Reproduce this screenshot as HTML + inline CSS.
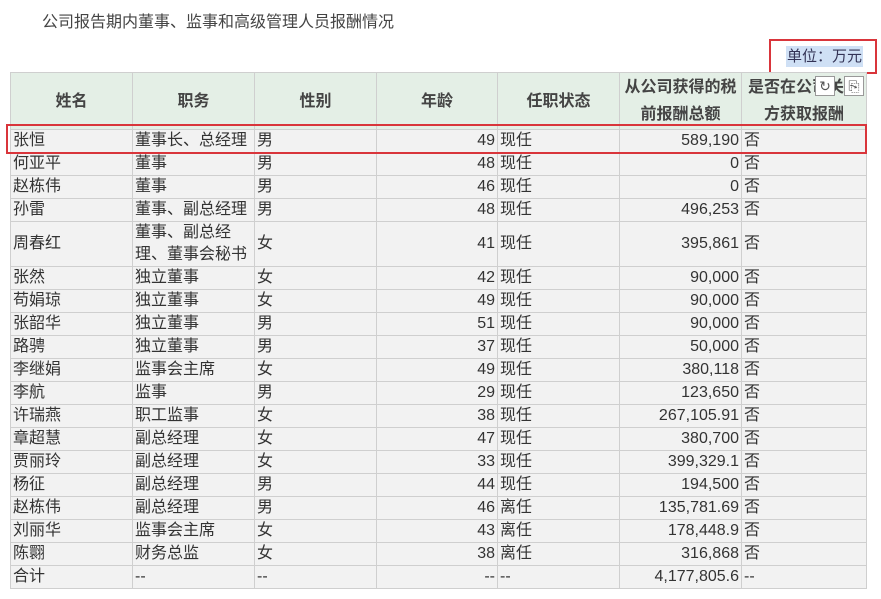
<!DOCTYPE html>
<html><head><meta charset="utf-8"><style>
body{margin:0;width:881px;height:599px;background:#fff;font-family:"Liberation Sans","Noto Sans CJK SC",sans-serif;position:relative;overflow:hidden}
.title{position:absolute;left:42px;top:8px;font-size:16px;color:#444}
.unit{position:absolute;left:786px;top:46px;font-size:15px;color:#335;background:#cfe0f5;line-height:21px;padding:0 1px}
.box1{position:absolute;left:769px;top:39px;width:104px;height:31px;border:2px solid #d9353b}
.box2{position:absolute;left:6px;top:124px;width:857px;height:26px;border:2px solid #d9353b}
table{position:absolute;left:10px;top:72px;border-collapse:collapse;table-layout:fixed;font-size:16px;color:#333}
td,th{border:1px solid #cfcfcf;padding:0 2px;white-space:nowrap;overflow:hidden;line-height:22px}
th{background:#e4efe6;font-weight:bold;color:#444;height:56px;font-size:16px;line-height:27px}
td{background:#f2f2f2;height:22px}
.r{text-align:right}
.ic{position:absolute;top:76px;width:18px;height:18px;border:1px solid #999;background:#fff;font-size:14px;line-height:18px;text-align:center;color:#555}
</style></head><body>
<div class="title">公司报告期内董事、监事和高级管理人员报酬情况</div>
<div class="unit">单位：万元</div>
<div class="box1"></div>
<table>
<colgroup><col style="width:122px"><col style="width:122px"><col style="width:122px"><col style="width:121px"><col style="width:122px"><col style="width:122px"><col style="width:125px"></colgroup>
<tr><th>姓名</th><th>职务</th><th>性别</th><th>年龄</th><th>任职状态</th><th>从公司获得的税<br>前报酬总额</th><th>是否在公司关联<br>方获取报酬</th></tr>
<tr><td>张恒</td><td>董事长、总经理</td><td>男</td><td class="r">49</td><td>现任</td><td class="r">589,190</td><td>否</td></tr>
<tr><td>何亚平</td><td>董事</td><td>男</td><td class="r">48</td><td>现任</td><td class="r">0</td><td>否</td></tr>
<tr><td>赵栋伟</td><td>董事</td><td>男</td><td class="r">46</td><td>现任</td><td class="r">0</td><td>否</td></tr>
<tr><td>孙雷</td><td>董事、副总经理</td><td>男</td><td class="r">48</td><td>现任</td><td class="r">496,253</td><td>否</td></tr>
<tr><td style="height:44px">周春红</td><td>董事、副总经<br>理、董事会秘书</td><td>女</td><td class="r">41</td><td>现任</td><td class="r">395,861</td><td>否</td></tr>
<tr><td>张然</td><td>独立董事</td><td>女</td><td class="r">42</td><td>现任</td><td class="r">90,000</td><td>否</td></tr>
<tr><td>苟娟琼</td><td>独立董事</td><td>女</td><td class="r">49</td><td>现任</td><td class="r">90,000</td><td>否</td></tr>
<tr><td>张韶华</td><td>独立董事</td><td>男</td><td class="r">51</td><td>现任</td><td class="r">90,000</td><td>否</td></tr>
<tr><td>路骋</td><td>独立董事</td><td>男</td><td class="r">37</td><td>现任</td><td class="r">50,000</td><td>否</td></tr>
<tr><td>李继娟</td><td>监事会主席</td><td>女</td><td class="r">49</td><td>现任</td><td class="r">380,118</td><td>否</td></tr>
<tr><td>李航</td><td>监事</td><td>男</td><td class="r">29</td><td>现任</td><td class="r">123,650</td><td>否</td></tr>
<tr><td>许瑞燕</td><td>职工监事</td><td>女</td><td class="r">38</td><td>现任</td><td class="r">267,105.91</td><td>否</td></tr>
<tr><td>章超慧</td><td>副总经理</td><td>女</td><td class="r">47</td><td>现任</td><td class="r">380,700</td><td>否</td></tr>
<tr><td>贾丽玲</td><td>副总经理</td><td>女</td><td class="r">33</td><td>现任</td><td class="r">399,329.1</td><td>否</td></tr>
<tr><td>杨征</td><td>副总经理</td><td>男</td><td class="r">44</td><td>现任</td><td class="r">194,500</td><td>否</td></tr>
<tr><td>赵栋伟</td><td>副总经理</td><td>男</td><td class="r">46</td><td>离任</td><td class="r">135,781.69</td><td>否</td></tr>
<tr><td>刘丽华</td><td>监事会主席</td><td>女</td><td class="r">43</td><td>离任</td><td class="r">178,448.9</td><td>否</td></tr>
<tr><td>陈翾</td><td>财务总监</td><td>女</td><td class="r">38</td><td>离任</td><td class="r">316,868</td><td>否</td></tr>
<tr><td>合计</td><td>--</td><td>--</td><td class="r">--</td><td>--</td><td class="r">4,177,805.6</td><td>--</td></tr>
</table>
<div class="ic" style="left:815px">↻</div>
<div class="ic" style="left:844px">⎘</div>
<div class="box2"></div>
</body></html>
